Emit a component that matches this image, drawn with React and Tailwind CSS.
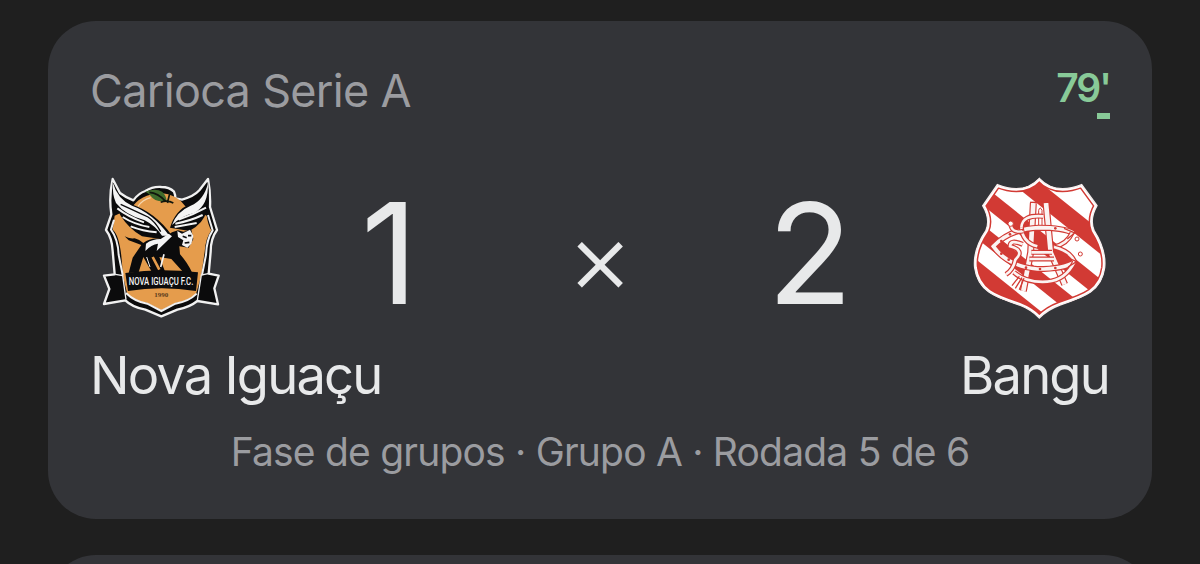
function NovaIguacuCrest() {
    return (
        <svg className="w-[145px] h-[165px] shrink-0" viewBox="0 0 435 495" fill="none">
            <path
                d="M68 42 L90 84 Q108 98 130 106 Q146 84 166 78 Q188 64 214 66 Q238 66 252 80 Q256 88 256 100 L276 104 Q312 94 328 76 L354 42 Q362 84 360 126 L381 195 Q362 220 362 260 L356 326 L386 332 L373 370 L384 418 L322 408 Q300 426 262 434 L214 454 L166 434 Q126 426 106 406 L42 417 L58 372 L42 332 L74 328 L68 258 Q66 218 48 195 L64 148 Q56 96 68 42Z"
                fill="#0b0b0c"
                stroke="#f1f1f1"
                strokeWidth="7"
                strokeLinejoin="round"
            />
            {/* orange body */}
            <path
                d="M74 152 Q100 140 124 130 Q150 88 212 84 Q262 88 286 124 Q320 140 350 152 Q354 180 364 196 Q346 222 344 260 L334 330 L318 388 Q294 408 256 414 L214 436 L172 414 Q134 408 112 388 L98 330 Q94 214 68 194Z"
                fill="#e59c4c"
            />
            <path
                d="M72 164 L63 194 Q84 222 86 270 L98 330 M354 150 L368 196 Q350 222 348 270 L336 330 M108 384 Q134 410 172 416 L214 438 L256 416 Q296 410 320 386"
                stroke="#f1f1f1"
                strokeWidth="6"
            />
            <path d="M144 124 Q158 104 182 98" stroke="#f5d7b0" strokeWidth="4" />
            <path d="M166 80 Q196 68 216 80 Q228 90 230 108 Q194 112 182 92 Q176 84 166 80Z" fill="#3f6b2c" />
            <path d="M178 82 Q204 84 226 108 M232 114 L240 82 M212 112 Q232 104 250 114" stroke="#10160d" strokeWidth="5" />
            {/* wings */}
            <path d="M68 50 Q82 100 124 118 Q196 142 246 212 L226 224 L156 214 Q116 190 92 152 Q64 110 68 50Z" fill="#0b0b0c" />
            <path d="M69 54 Q82 102 126 122 Q188 144 238 212 L216 212 Q196 182 164 166 Q106 150 78 114 Q66 88 69 54Z" fill="#f4f4f4" />
            <path d="M82 130 Q116 156 162 172 M98 156 Q132 178 178 186 M122 184 Q158 198 200 202" stroke="#f4f4f4" strokeWidth="6" />
            <path d="M92 118 Q140 140 174 156 Q196 170 212 200" stroke="#0b0b0c" strokeWidth="4" />
            <path d="M354 50 Q344 98 302 116 Q256 134 240 188 L298 198 Q340 176 350 138 Q360 102 354 50Z" fill="#0b0b0c" />
            <path d="M354 54 Q342 106 302 122 Q260 140 246 180 Q276 152 312 144 Q356 122 354 54Z" fill="#f4f4f4" />
            <path d="M348 128 Q308 150 266 164 M338 150 Q300 168 256 176 M320 174 L254 186" stroke="#f4f4f4" strokeWidth="6" />
            {/* panther */}
            <path
                d="M104 214 Q116 222 134 220 Q148 224 160 234 Q182 216 216 222 L246 202 L264 196 L280 200 L304 194 L310 222 L296 248 L268 244 L270 268 Q292 292 308 326 L284 326 L244 282 L208 276 L226 322 L186 322 L160 276 L146 322 L116 324 L128 278 L154 240 Q132 232 116 226Z"
                fill="#0b0b0c"
            />
            <path d="M168 236 Q186 222 212 222 L236 206 L246 214 L200 258 L204 236 Q184 238 166 258Z" fill="#f4f4f4" />
            <path d="M222 268 L212 306" stroke="#f4f4f4" strokeWidth="5" />
            <path d="M170 276 L180 306" stroke="#f4f4f4" strokeWidth="3" />
            <path d="M188 276 L208 314 M160 298 L156 318" stroke="#e59c4c" strokeWidth="8" />
            <path d="M262 198 L276 206 L300 194 L310 212 L304 236 L292 248 L276 240 L280 226 L264 216Z" fill="#f4f4f4" />
            <path d="M278 214 L290 218 M294 212 L304 212 M284 234 L298 232" stroke="#0b0b0c" strokeWidth="5" />
            {/* ribbon */}
            <path d="M106 324 Q210 308 324 322 L318 378 Q214 362 114 378Z" fill="#0b0b0c" />
            <path d="M76 328 L98 332 L108 404 M354 326 L334 330 L322 406" stroke="#f1f1f1" strokeWidth="4" />
            <text x="213" y="361" textAnchor="middle" textLength="194" lengthAdjust="spacingAndGlyphs" fill="#f4f4f4" className="font-['Roboto',sans-serif] text-[32px] font-medium">NOVA IGUAÇU F.C.</text>
            <text x="214" y="397" textAnchor="middle" textLength="42" lengthAdjust="spacingAndGlyphs" fill="#5b3b1c" className="font-['Liberation_Serif',serif] text-[17px] font-bold">1990</text>
        </svg>
    );
}

const SHIELD = "M238 40 Q284 90 365 59 L411 122 Q388 162 402 196 C426 234 438 270 434 308 C424 380 372 396 300 420 Q262 434 238 459 Q214 434 178 420 C106 396 54 380 44 308 C40 270 52 234 78 196 Q92 162 68 122 L112 59 Q192 90 238 40Z";

// red outline with a white core
function Strap({ d, width = 16 }) {
    return (
        <>
            <path d={d} stroke="#d23a34" strokeWidth={width + 7} />
            <path d={d} stroke="#fbf3f2" strokeWidth={width} />
        </>
    );
}

function BanguCrest() {
    return (
        <svg className="w-[150px] h-[165px] shrink-0" viewBox="0 0 450 495" fill="none">
            <clipPath id="shield"><path d={SHIELD} /></clipPath>
            <path d={SHIELD} fill="#fff" />
            <g clipPath="url(#shield)" fill="#d23a34">
                <path d="M0 -140 L450 220 L450 290 L0 -70Z" />
                <path d="M0 5 L450 365 L450 426 L0 66Z" />
                <path d="M0 125 L450 485 L450 540 L0 180Z" />
                <path d="M0 245 L450 605 L0 605Z" />
                <path d="M200 -60 L450 140 L450 -60Z" />
            </g>
            <path d={SHIELD} stroke="#d23a34" strokeWidth="22" clipPath="url(#shield)" />
            <path d={SHIELD} stroke="#fff" strokeWidth="13" clipPath="url(#shield)" />
            <path d={SHIELD} stroke="#f6eeee" strokeWidth="4" />
            {/* interlaced monogram */}
            <Strap d="M190 378 L212 262 L220 114" width={14} />
            <Strap d="M258 114 L272 262 L314 358" width={14} />
            <path d="M210 112 H268" stroke="#d23a34" strokeWidth="4" />
            <path d="M236 184 V136 Q240 122 246 136 V184" stroke="#d23a34" strokeWidth="3" />
            <Strap d="M214 262 H276 M208 282 H282" width={8} />
            <Strap d="M340 204 Q310 188 236 188 Q150 192 100 244 Q142 304 232 312 Q312 312 344 290" width={11} />
            <Strap d="M184 184 Q186 232 232 244" width={8} />
            <Strap d="M282 246 Q322 236 336 204" width={8} />
            <Strap d="M282 246 Q330 258 344 290 Q316 346 262 350 Q196 354 162 322" width={8} />
            <Strap d="M250 154 Q186 148 184 188" width={8} />
            <Strap d="M188 238 Q150 222 150 244 Q196 256 166 284 Q160 314 138 328" width={8} />
            <Strap d="M152 176 Q154 206 190 198" width={7} />
            <path d="M156 362 L178 334 M166 370 L186 338 M178 374 L192 340" stroke="#d23a34" strokeWidth="4" />
            <g stroke="#d23a34" strokeWidth="3" fill="#fff">
                <circle cx="152" cy="176" r="8" />
                <circle cx="351" cy="222" r="6" />
                <circle cx="361" cy="267" r="6" />
            </g>
            <path d="M312 190 L344 204 L322 222 M318 276 L350 290 L324 306" stroke="#d23a34" strokeWidth="4" />
            <g fill="#d23a34">
                <circle cx="124" cy="228" r="4" />
                <circle cx="150" cy="208" r="4" />
                <circle cx="124" cy="266" r="4" />
                <circle cx="146" cy="284" r="4" />
                <circle cx="188" cy="194" r="3" />
                <circle cx="286" cy="190" r="4" />
                <circle cx="198" cy="308" r="4" />
                <circle cx="240" cy="312" r="4" />
                <circle cx="286" cy="309" r="4" />
            </g>
        </svg>
    );
}

function MatchCard({ league, minute, home, away, stage }) {
    return (
        <div className="h-[498px] shrink-0 rounded-[48px] bg-[#333438] px-[42px]">
            <div className="flex h-36 items-start justify-between pt-[42px]">
                <span className="text-[45px] leading-[56px] tracking-[-0.7px] text-[#9b9ca0]">{league}</span>
                <div className="flex flex-col items-end text-[#88ca98]">
                    <span className="text-[39px] font-semibold leading-[49px] tracking-[-2px]">{minute}</span>
                    <span className="mt-px h-1.5 w-[13px] bg-[#88ca98]" />
                </div>
            </div>

            <div className="flex items-center text-[#e8e9ea]">
                <NovaIguacuCrest />
                <span className="w-[305px] pl-1 pt-[11px] text-center text-[140px] leading-[140px]">{home.score}</span>
                <span className="w-[120px] pt-[18px] text-center text-[102px] font-light leading-[100px]">×</span>
                <span className="w-[300px] pt-[11px] text-center text-[140px] leading-[140px]">{away.score}</span>
                <BanguCrest />
            </div>

            <div className="mt-[15px] flex justify-between text-[52.5px] leading-[60px] tracking-[-1.8px] text-[#e8e9ea]">
                <span>{home.name}</span>
                <span className="mr-px">{away.name}</span>
            </div>

            <div className="mt-[23px] whitespace-nowrap text-center text-[39px] leading-[48px] tracking-[-0.8px] text-[#9b9ca0]">{stage}</div>
        </div>
    );
}

export default function App() {
    return (
        <main className="flex h-[564px] flex-col gap-9 overflow-hidden bg-[#1f1f1f] px-12 pt-[21px] font-['Inter',sans-serif]">
            <MatchCard
                league="Carioca Serie A"
                minute="79'"
                home={{ name: "Nova Iguaçu", score: 1 }}
                away={{ name: "Bangu", score: 2 }}
                stage="Fase de grupos · Grupo A · Rodada 5 de 6"
            />
            <div className="h-[498px] shrink-0 rounded-[48px] bg-[#333438]" />
        </main>
    );
}
